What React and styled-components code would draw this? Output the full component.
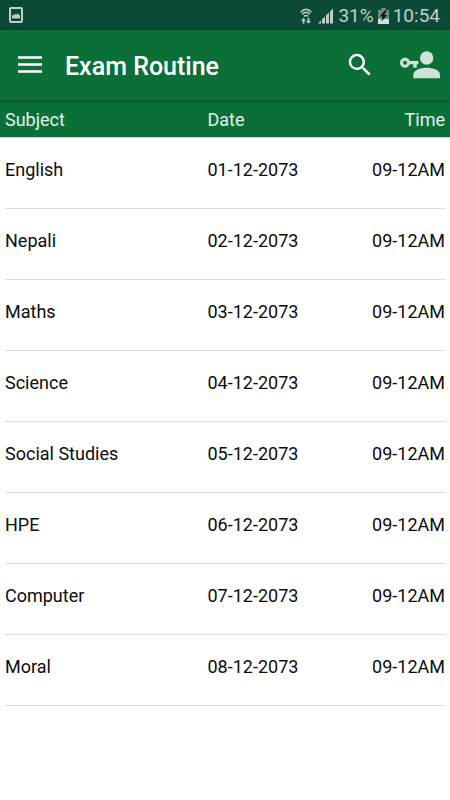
import React from 'react'
import styled, { createGlobalStyle } from 'styled-components'

const GlobalStyle = createGlobalStyle`
  * {
    box-sizing: border-box;
  }

  body {
    margin: 0;
    background: #fff;
    color: #0c0c0c;
    font-family: Roboto, 'Liberation Sans', sans-serif;
  }
`

const StatusBar = styled.div`
  display: flex;
  align-items: center;
  justify-content: space-between;
  height: 30px;
  padding: 0 10px 0 9px;
  background: #0c4a38;
  color: #bfd0ca;
  font-size: 19px;
  line-height: 24px;

  svg {
    display: block;
  }
`

const StatusGroup = styled.div`
  display: flex;
  align-items: center;
  gap: 4px;
  padding-top: 2px;
`

const Toolbar = styled.header`
  position: relative;
  display: flex;
  align-items: center;
  height: 70px;
  padding: 0 10px 0 15px;
  background: #0b7038;
  box-shadow: 0 1px 5px rgba(0, 0, 0, 0.4);
`

const Title = styled.h1`
  flex: 1;
  margin: 0 0 0 20px;
  padding-top: 3px;
  color: #fff;
  font-size: 25px;
  font-weight: 500;
  line-height: 32px;
`

const IconButton = styled.button`
  display: flex;
  margin: 0 0 0 ${(props) => props.$gap || 0};
  padding: 0;
  border: 0;
  background: none;
  color: ${(props) => props.$color || '#fff'};
  cursor: pointer;

  svg {
    display: block;
  }
`

const RoutineTable = styled.table`
  width: 100%;
  border-spacing: 0;
  table-layout: fixed;
  font-size: 18px;
  line-height: 24px;
`

const HeadCell = styled.th`
  width: ${(props) => props.$width};
  padding: 8px 5px 5px;
  border-bottom: 1px solid #c3d9c6;
  background: #0b7038;
  color: #e4f0e8;
  font-weight: 400;
  text-align: ${(props) => props.$align || 'left'};
`

// divider stops 5px short of both edges
const Row = styled.tr`
  background: linear-gradient(#dcdcdc, #dcdcdc) bottom / calc(100% - 10px) 1px
    no-repeat;
`

const Cell = styled.td`
  padding: 20px 5px 27px;
  text-align: ${(props) => props.$align || 'left'};
`

const exams = [
  { subject: 'English', date: '01-12-2073', time: '09-12AM' },
  { subject: 'Nepali', date: '02-12-2073', time: '09-12AM' },
  { subject: 'Maths', date: '03-12-2073', time: '09-12AM' },
  { subject: 'Science', date: '04-12-2073', time: '09-12AM' },
  { subject: 'Social Studies', date: '05-12-2073', time: '09-12AM' },
  { subject: 'HPE', date: '06-12-2073', time: '09-12AM' },
  { subject: 'Computer', date: '07-12-2073', time: '09-12AM' },
  { subject: 'Moral', date: '08-12-2073', time: '09-12AM' },
]

const PictureIcon = () => (
  <svg width="14" height="16" viewBox="0 0 14 16" aria-hidden="true">
    <rect x="1" y="1" width="12" height="14" rx="1" fill="none" stroke="currentColor" strokeWidth="2" />
    <path d="M3 11.500V9l1.200-1.500L5.300 8.500 6.500 6.500l1 1.500 1.200-2 1 2 .8-.5.5 1.500v2.500z" fill="currentColor" />
  </svg>
)

const WifiIcon = () => (
  <svg width="14" height="16" viewBox="0 0 14 16" aria-hidden="true">
    <g fill="none" stroke="currentColor" strokeWidth="1.600">
      <path d="M.7 4.200Q6-1.800 11.300 4.200" />
      <path d="M2.300 6.300Q6 2.300 9.700 6.300" />
      <path d="M4 8.500Q6 6.500 8 8.500" />
    </g>
    <path d="M3.500 10 6 12.500H4.400V15.500H2.600V12.500H1z" fill="currentColor" />
    <path d="M8.500 15.500 6 13H7.600V10H9.400V13H11z" fill="currentColor" />
  </svg>
)

const SignalIcon = () => (
  <svg width="16" height="16" viewBox="0 0 16 16" fill="currentColor" aria-hidden="true">
    <path d="M0 15.500 3 12.500v3zM4 11.500l3-3v7H4zM8 7.500l3-3v11H8zM12 3.500 15 .5v15h-3z" />
  </svg>
)

const BatteryIcon = () => (
  <svg width="11" height="16" viewBox="0 0 10 16" preserveAspectRatio="none" aria-hidden="true">
    <path d="M3 0h4v2h3v14H0V2h3z" fill="#6f8f84" />
    <path d="M0 11h10v5H0z" fill="#d3dfda" />
    <path d="M6 2.500 1.500 8.500h2.700L3 13.500l5.500-6.500H5.700L8 2.500z" fill="#0a1512" />
  </svg>
)

const MenuIcon = () => (
  <svg width="30" height="30" viewBox="0 0 30 30" fill="currentColor" aria-hidden="true">
    <path d="M3 6.300h24v2.500H3zM3 13.300h24v2.500H3zM3 20.300h24v2.500H3z" />
  </svg>
)

const SearchIcon = () => (
  <svg width="30" height="30" viewBox="0 0 24 24" fill="currentColor" aria-hidden="true">
    <path d="M15.500 14h-.79l-.28-.27A6.471 6.471 0 0 0 16 9.500 6.500 6.500 0 1 0 9.500 16c1.610 0 3.090-.59 4.230-1.570l.27.28v.79l5 4.990L20.490 19l-4.990-5zm-6 0C7.010 14 5 11.990 5 9.500S7.010 5 9.500 5 14 7.010 14 9.500 11.990 14 9.500 14z" />
  </svg>
)

const AccountKeyIcon = () => (
  <svg width="40" height="28" viewBox="0 0 40 28" fill="currentColor" aria-hidden="true">
    <circle cx="26.700" cy="7" r="6.700" />
    <path d="M13.300 27.300v-3.600c0-4.500 7-7 13.400-7s13.300 2.500 13.300 7v3.600z" />
    <path
      fillRule="evenodd"
      d="M9.700 10H18.300v3.300h-1.600v3.400h-3.400v-3.400H9.700A5 5 0 1 1 9.700 10zM5 9.700a2 2 0 1 0 0 4 2 2 0 0 0 0-4z"
    />
  </svg>
)

const App = () => {
  return (
    <>
      <GlobalStyle />
      <StatusBar>
        <PictureIcon />
        <StatusGroup>
          <WifiIcon />
          <SignalIcon />
          <span>31%</span>
          <BatteryIcon />
          <span>10:54</span>
        </StatusGroup>
      </StatusBar>
      <Toolbar>
        <IconButton type="button" aria-label="Open menu">
          <MenuIcon />
        </IconButton>
        <Title>Exam Routine</Title>
        <IconButton type="button" aria-label="Search">
          <SearchIcon />
        </IconButton>
        <IconButton type="button" aria-label="Account" $gap="25px" $color="#cee2d7">
          <AccountKeyIcon />
        </IconButton>
      </Toolbar>
      <main>
        <RoutineTable>
          <thead>
            <tr>
              <HeadCell scope="col" $width="45%">
                Subject
              </HeadCell>
              <HeadCell scope="col" $width="30%">
                Date
              </HeadCell>
              <HeadCell scope="col" $width="25%" $align="right">
                Time
              </HeadCell>
            </tr>
          </thead>
          <tbody>
            {exams.map((exam) => (
              <Row key={exam.subject}>
                <Cell>{exam.subject}</Cell>
                <Cell>{exam.date}</Cell>
                <Cell $align="right">{exam.time}</Cell>
              </Row>
            ))}
          </tbody>
        </RoutineTable>
      </main>
    </>
  )
}

export default App
